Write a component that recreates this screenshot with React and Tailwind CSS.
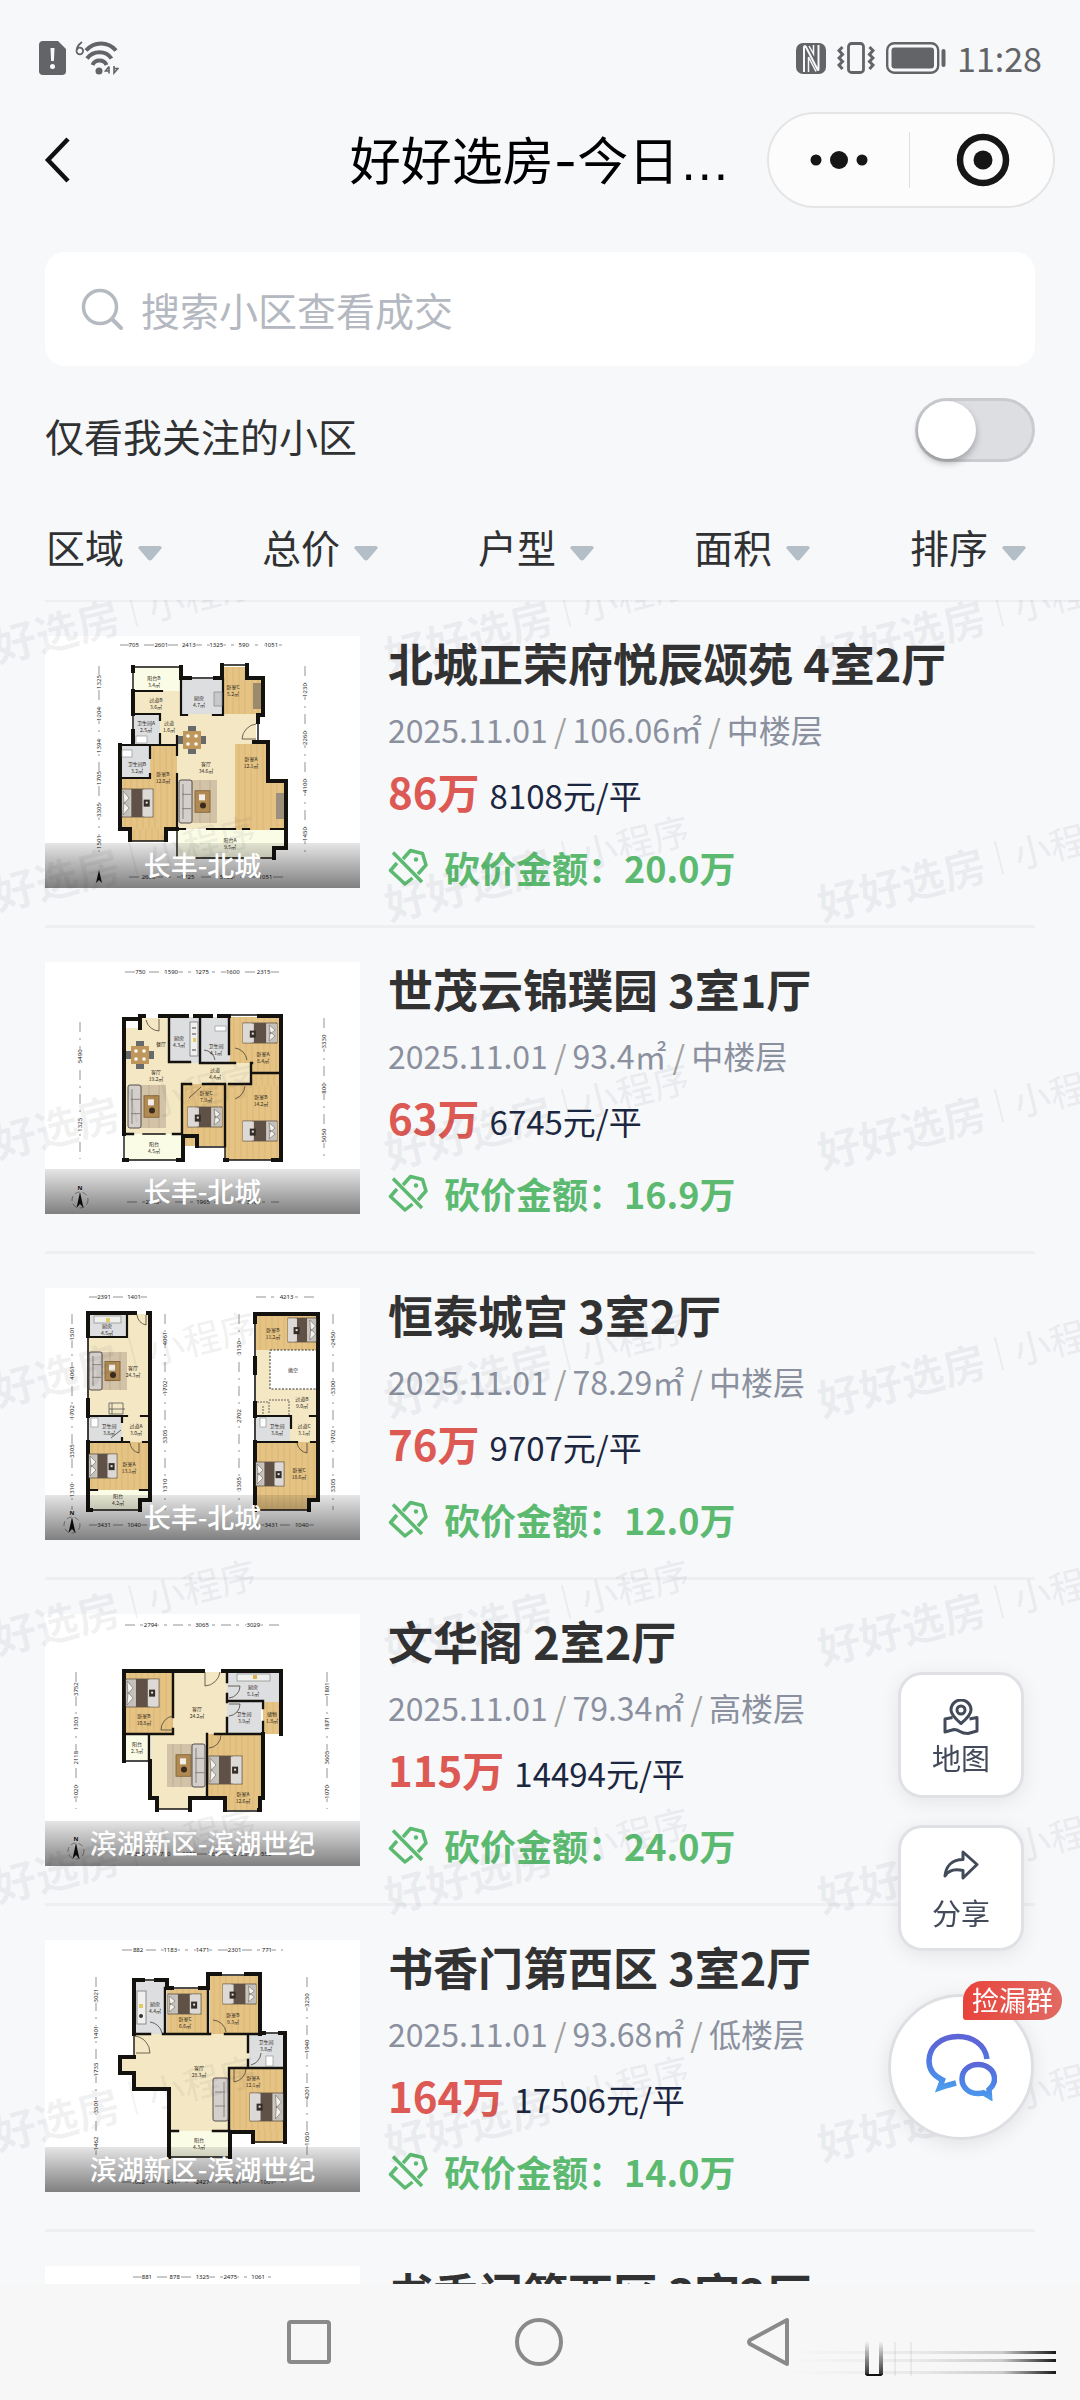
import React from "react";

/* ---------- floor plan pieces ---------- */

const WOOD = "#e5c384";
const CREAM = "#f4e8c4";
const TILE = "#dcdee0";
const PALE = "#fbfce6";
const WALL = "#14120f";

function Room({ x, y, w, h, fill }) {
  return <rect x={x} y={y} width={w} height={h} fill={fill} />;
}

function Wood({ x, y, w, h }) {
  const lines = [];
  for (let i = 4; i < w; i += 6) {
    lines.push(<path key={i} d={`M${x + i} ${y}v${h}`} stroke="#d3a65d" strokeWidth="0.7" opacity="0.5" />);
  }
  return (
    <g>
      <Room x={x} y={y} w={w} h={h} fill={WOOD} />
      {lines}
    </g>
  );
}

function Bed({ x, y, w = 32, h = 28, flip = false }) {
  const head = flip ? x + w * 0.74 : x;
  const blanket = flip ? x + w * 0.26 : x + w * 0.3;
  const sheet = flip ? x : x + w * 0.66;
  return (
    <g>
      <rect x={x} y={y} width={w} height={h} fill="#cfc9c2" stroke="#5d5045" strokeWidth="0.8" />
      <rect x={head} y={y + 1} width={w * 0.26} height={h - 2} fill="#c4c0bb" />
      <path d={`M${head + 1} ${y + 2}l6 ${h / 4}l-5 ${h / 5}zM${head + 1} ${y + h - 2}l6 ${-h / 4}l-5 ${-h / 5}z`} fill="#f4f2ee" stroke="#6e675f" strokeWidth="0.6" />
      <rect x={blanket} y={y} width={w * 0.42} height={h} fill="#5f5146" />
      <rect x={sheet} y={y + 0.5} width={w * 0.32} height={h - 1} fill="#dcd9d6" />
      <rect x={flip ? x + w * 0.2 : x + w * 0.7} y={y + h * 0.38} width="6" height="7" fill="#352d27" />
      <rect x={flip ? x + w * 0.2 + 2 : x + w * 0.7 + 2} y={y + h * 0.38 + 2} width="2" height="2" fill="#e9e4de" />
    </g>
  );
}

function Lounge({ x, y, h = 44, flip = false }) {
  const sofa = flip ? x + 25 : x;
  const rug = flip ? x : x + 7;
  return (
    <g>
      <rect x={rug} y={y} width="31" height={h} fill="#d2c3a8" />
      <path d={`M${rug + 6} ${y}v${h}M${rug + 14} ${y}v${h}M${rug + 24} ${y}v${h}`} stroke="#bba88a" strokeWidth="0.8" />
      <rect x={rug + 9} y={y + h / 4} width="15" height={h / 2} fill="#b18a53" stroke="#7c5c32" strokeWidth="0.8" />
      <rect x={rug + 13} y={y + h / 3} width="6" height="6" fill="#f2eee7" />
      <circle cx={rug + 17} cy={y + h / 2 + 4} r="3" fill="#392a1e" />
      <rect x={sofa} y={y} width="13" height={h} rx="2" fill="#d4cfcb" stroke="#55504c" strokeWidth="1" />
      <path d={`M${sofa + 3} ${y + h / 3}h9M${sofa + 3} ${y + (h * 2) / 3}h9M${sofa + 4} ${y + 4}v${h - 8}`} stroke="#77706a" strokeWidth="0.8" />
    </g>
  );
}

function Dining({ x, y }) {
  return (
    <g>
      <path d={`M${x + 8} ${y}h8v6h-8zM${x + 8} ${y + 22}h8v6h-8zM${x - 2} ${y + 10}h6v8h-6zM${x + 20} ${y + 10}h6v8h-6z`} fill="#67696b" />
      <rect x={x + 3} y={y + 5} width="18" height="18" fill="#bf975b" />
      <circle cx={x + 8} cy={y + 10} r="1.8" fill="#fff" />
      <circle cx={x + 16} cy={y + 10} r="1.8" fill="#fff" />
      <circle cx={x + 8} cy={y + 18} r="1.8" fill="#fff" />
      <circle cx={x + 16} cy={y + 18} r="1.8" fill="#fff" />
    </g>
  );
}

function Names({ items }) {
  return (
    <g fill="#2c2519" fontSize="5" textAnchor="middle" fontFamily='"Noto Sans CJK SC", sans-serif'>
      {items.map(([x, y, name, size], i) => (
        <g key={i}>
          <text x={x} y={y}>{name}</text>
          {size && <text x={x} y={y + 7}>{size}</text>}
        </g>
      ))}
    </g>
  );
}

function DimsH({ x1, x2, y, values }) {
  const step = (x2 - x1) / values.length;
  return (
    <g>
      <path d={`M${x1} ${y}H${x2}`} stroke="#666" strokeWidth="0.7" strokeDasharray="10 5 3 6" />
      {values.map((v, i) => (
        <text key={i} x={x1 + step * (i + 0.5)} y={y + 2} fontSize="6" textAnchor="middle" fill="#222" stroke="#fff" strokeWidth="1.5" paintOrder="stroke" fontFamily='"Noto Sans", sans-serif'>{v}</text>
      ))}
    </g>
  );
}

function DimsV({ x, y1, y2, values }) {
  const step = (y2 - y1) / values.length;
  return (
    <g>
      <path d={`M${x} ${y1}V${y2}`} stroke="#666" strokeWidth="0.7" strokeDasharray="10 6 2 6" />
      {values.map((v, i) => {
        const cy = y1 + step * (i + 0.5);
        return (
          <text key={i} x={x} y={cy} transform={`rotate(-90 ${x} ${cy})`} dy="2" fontSize="6" textAnchor="middle" fill="#222" stroke="#fff" strokeWidth="1.5" paintOrder="stroke" fontFamily='"Noto Sans", sans-serif'>{v}</text>
        );
      })}
    </g>
  );
}

function Compass({ x, y }) {
  return (
    <g>
      <circle cx={x} cy={y} r="8" fill="none" stroke="#777" strokeWidth="0.7" strokeDasharray="5 3" />
      <path d={`M${x} ${y - 8}l3.5 16l-3.5 -4l-3.5 4z`} fill="#111" />
      <text x={x} y={y - 10} fontSize="6" textAnchor="middle" fill="#111" fontFamily='"Noto Sans", sans-serif' fontWeight="700">N</text>
    </g>
  );
}

function Walls({ d, w = 4 }) {
  return <path d={d} fill="none" stroke={WALL} strokeWidth={w} strokeLinejoin="miter" strokeLinecap="square" />;
}

function Doors({ d }) {
  return <path d={d} fill="none" stroke="#4a4338" strokeWidth="0.8" />;
}

function PlanA() {
  return (
    <g>
      <Room x={87} y={31} w={49} h={24} fill={PALE} />
      <Room x={87} y={55} w={49} h={23} fill={CREAM} />
      <Room x={137} y={43} w={41} h={35} fill={TILE} />
      <Wood x={178} y={31} w={25} h={48} />
      <Wood x={203} y={43} w={15} h={36} />
      <Room x={87} y={78} w={28} h={31} fill={TILE} />
      <Room x={115} y={78} w={96} h={31} fill={CREAM} />
      <Room x={132} y={108} w={59} h={85} fill={CREAM} />
      <Wood x={190} y={108} w={33} h={86} />
      <Wood x={222} y={146} w={17} h={48} />
      <Room x={76} y={109} w={29} h={33} fill={TILE} />
      <Wood x={105} y={109} w={27} h={34} />
      <Wood x={76} y={142} w={56} h={51} />
      <Wood x={85} y={193} w={34} h={12} />
      <Room x={132} y={194} w={108} h={20} fill={PALE} />
      <Room x={132} y={212} w={96} h={10} fill={PALE} />
      <Walls d="M88 31V35M136 31V42H145M170 42H177V29M202 29V42H218V79H213V86" />
      <Walls d="M88 55V78M88 95V108M75 109V193H85V204M121 204V193H132" />
      <Walls d="M209 106H223V145H241V212H229V222" />
      <Walls w={1.4} d="M88 31H136M88 31V108M145 42H170M178 29H202M85 205H120M132 194V222H229M213 86V106" />
      <Walls w={2.2} d="M88 55H117M88 78H115M136 43V79H142M168 79H178V43M115 78V84M115 98V109M75 109H132V100M132 109V119M132 138V194M105 109V122M75 142H105V138M132 193H140M162 193H190M198 193H204M226 193H241" />
      <rect x="208" y="47" width="8" height="26" fill="#9c8a6d" />
      <rect x="231" y="157" width="8" height="26" fill="#9c8f7c" />
      <rect x="169" y="56" width="8" height="14" fill="#c6c8ca" stroke="#888" strokeWidth="0.7" />
      <rect x="91" y="100" width="11" height="7" fill="#fff" stroke="#888" strokeWidth="0.6" />
      <rect x="77" y="114" width="10" height="7" fill="#fff" stroke="#888" strokeWidth="0.6" />
      <Doors d="M197 103A16 16 0 0 1 211 88M197 103H211" />
      <Bed x={77} y={153} w={31} h={28} />
      <Lounge x={134} y={144} h={43} />
      <Dining x={135} y={90} />
      <Names items={[[109, 44, "阳台B", "3.4㎡"], [111, 66, "过道B", "3.6㎡"], [154, 64, "厨房", "4.7㎡"], [188, 53, "卧室C", "5.2㎡"], [101, 89, "卫生间A", "2.5㎡"], [124, 89, "过道", "1.6㎡"], [161, 130, "客厅", "34.6㎡"], [206, 125, "卧室A", "12.1㎡"], [92, 130, "卫生间B", "3.2㎡"], [118, 140, "卧室B", "12.0㎡"], [185, 206, "阳台A", "9.5㎡"]]} />
      <DimsH x1={75} x2={240} y={9} values={["705", "2601", "2413", "1325", "590", "1051"]} />
      <DimsH x1={84} x2={240} y={241} values={["2600", "1725", "5103", "1051"]} />
      <DimsV x={54} y1={30} y2={222} values={["1325", "1204", "1394", "1705", "3305", "1501"]} />
      <DimsV x={260} y1={30} y2={222} values={["1230", "2260", "4100", "1450"]} />
      <path d="M54 234l3 13l-3 -3l-3 3z" fill="#111" />
    </g>
  );
}

function PlanB() {
  return (
    <g>
      <Room x={80} y={66} w={58} h={106} fill={CREAM} />
      <Room x={94} y={56} w={30} h={12} fill={CREAM} />
      <Room x={124} y={55} w={31} h={46} fill={TILE} />
      <Room x={156} y={55} w={29} h={46} fill={TILE} />
      <Wood x={185} y={55} w={49} h={56} />
      <Room x={137} y={101} w={70} h={22} fill={CREAM} />
      <Wood x={137} y={122} w={42} h={62} />
      <Wood x={180} y={122} w={54} h={76} />
      <Wood x={207} y={112} w={27} h={12} />
      <Room x={80} y={172} w={57} h={26} fill={PALE} />
      <Walls d="M95 66V57H79V172M95 54H99M115 54H142M150 54H166M174 54H184M214 54H236V198H228M79 198H82M133 198H138V174H152V184M180 198H182" />
      <Walls w={1.4} d="M184 53H214M79 172V198H133M152 185H180V198H228M98 172H120" />
      <Walls w={2.4} d="M124 55V100H145M155 55V101H190M184 55V92M79 172H88M128 172H137V122H146M158 122H180V184M184 122H206V101H207M206 111H236" />
      <Doors d="M101 58A14 14 0 0 0 114 69V57M190 86A14 14 0 0 1 202 98M190 137A16 16 0 0 0 200 124M144 136L156 125M159 88A12 12 0 0 1 170 98" />
      <rect x="145" y="60" width="8" height="34" fill="#f0f0ee" stroke="#777" strokeWidth="0.8" />
      <path d="M147 66h4M147 72h4M147 88h4" stroke="#444" />
      <rect x="148" y="76" width="3" height="4" fill="#e1cc63" />
      <rect x="170" y="64" width="11" height="5" fill="#fff" stroke="#888" strokeWidth="0.6" />
      <Dining x={83} y={79} />
      <Lounge x={83} y={123} h={43} />
      <Bed x={198} y={61} w={34} h={20} flip />
      <Bed x={143} y={145} w={34} h={20} flip />
      <Bed x={198} y={159} w={34} h={20} flip />
      <Names items={[[116, 84, "餐厅", ""], [111, 112, "客厅", "19.2㎡"], [134, 78, "厨房", "4.3㎡"], [171, 86, "卫生间", "4.1㎡"], [218, 94, "卧室A", "8.4㎡"], [170, 110, "过道", "4.4㎡"], [161, 133, "卧室C", "7.9㎡"], [216, 137, "卧室B", "14.2㎡"], [109, 184, "阳台", "4.5㎡"]]} />
      <DimsH x1={80} x2={234} y={10} values={["750", "1590", "1275", "1600", "2315"]} />
      <DimsH x1={82} x2={234} y={240} values={["2845", "1965", "3100"]} />
      <DimsV x={35} y1={60} y2={197} values={["5490", "1325"]} />
      <DimsV x={279} y1={56} y2={197} values={["3330", "800", "5050"]} />
      <Compass x={35} y={238} />
    </g>
  );
}

function PlanC() {
  return (
    <g>
      <Room x={43} y={26} w={60} h={102} fill={CREAM} />
      <Room x={43} y={26} w={39} h={23} fill={TILE} />
      <Room x={43} y={128} w={34} h={25} fill={TILE} />
      <Room x={77} y={128} w={27} h={26} fill={CREAM} />
      <Wood x={43} y={154} w={61} h={48} />
      <Room x={43} y={202} w={60} h={10} fill={PALE} />
      <Room x={43} y={212} w={51} h={10} fill={PALE} />
      <Walls d="M90 25H43V48M43 112V128M43 154V222H46M95 222V212H105V25H103" />
      <Walls w={1.6} d="M43 48V112M43 128V154M46 222H95" />
      <Walls w={2.2} d="M43 49H82V26M43 128H82M96 128H104M77 128V134M43 154H84M98 154H104M77 150V154M43 202H52M95 202H104" />
      <rect x="49" y="28" width="27" height="7" fill="#efefec" stroke="#888" strokeWidth="0.7" />
      <rect x="61" y="30" width="4" height="4" fill="#e1cc63" />
      <Lounge x={44} y={64} h={38} />
      <path d="M64 115h14v11h-14zM67 115v11M64 121h16" fill="none" stroke="#555" strokeWidth="0.8" />
      <rect x="46" y="130" width="7" height="9" fill="#fff" stroke="#888" strokeWidth="0.6" />
      <Bed x={44} y={166} w={28} h={24} />
      <Room x={211} y={62} w={61} h={66} fill={CREAM} />
      <Wood x={211} y={27} w={61} h={35} />
      <rect x="225" y="62" width="47" height="39" fill="#fff" stroke="#333" strokeWidth="1" strokeDasharray="2 1.5" />
      <Room x={211} y={128} w={34} h={26} fill={TILE} />
      <Room x={245} y={128} w={27} h={26} fill={CREAM} />
      <Wood x={211} y={154} w={61} h={58} />
      <Wood x={211} y={212} w={52} h={10} />
      <Walls d="M210 34V26H273V212H264V222M210 70V85M210 115V128M210 154V222" />
      <Walls w={1.6} d="M210 34V128V222H263" />
      <Walls w={2.2} d="M210 128H246V140M265 128H273M210 154H252M266 154H273" />
      <path d="M224 112h20v15M212 114h12v12M218 126v-9" fill="none" stroke="#555" strokeWidth="0.9" strokeDasharray="2 1" />
      <rect x="215" y="130" width="6" height="9" fill="#fff" stroke="#888" strokeWidth="0.6" />
      <Bed x={243} y={30} w={28} h={24} flip />
      <Bed x={211} y={174} w={28} h={24} />
      <Doors d="M92 27A12 12 0 0 0 101 37V27M85 155A12 12 0 0 0 94 165V155M252 155A12 12 0 0 0 262 165V155M66 150L76 142" />
      <Names items={[[62, 40, "厨房", "4.5㎡"], [88, 82, "客厅", "24.3㎡"], [64, 140, "卫生间", "3.8㎡"], [91, 140, "过道A", "3.0㎡"], [84, 178, "卧室A", "13.1㎡"], [73, 210, "阳台", "4.2㎡"], [228, 44, "卧室B", "11.2㎡"], [248, 84, "挑空", ""], [257, 113, "过道B", "9.0㎡"], [232, 140, "卫生间", "3.8㎡"], [259, 140, "过道C", "3.1㎡"], [254, 184, "卧室C", "18.6㎡"]]} />
      <DimsH x1={44} x2={104} y={9} values={["2391", "1401"]} />
      <DimsH x1={211} x2={272} y={9} values={["4213"]} />
      <DimsH x1={44} x2={104} y={237} values={["3431", "1040"]} />
      <DimsH x1={211} x2={272} y={237} values={["3431", "1040"]} />
      <DimsV x={27} y1={26} y2={222} values={["1501", "4061", "1702", "3305", "1310"]} />
      <DimsV x={120} y1={26} y2={222} values={["4061", "1702", "3305", "1310"]} />
      <DimsV x={194} y1={26} y2={230} values={["3150", "2702", "3305"]} />
      <DimsV x={288} y1={26} y2={222} values={["2450", "3300", "1702", "3305"]} />
      <Compass x={27} y={237} />
    </g>
  );
}

function PlanD() {
  return (
    <g>
      <Wood x={81} y={58} w={47} h={62} />
      <Room x={81} y={120} w={23} h={26} fill={PALE} />
      <Room x={128} y={58} w={54} h={63} fill={CREAM} />
      <Room x={106} y={120} w={56} h={63} fill={CREAM} />
      <Room x={112} y={182} w={32} h={13} fill={CREAM} />
      <Room x={182} y={58} w={52} h={30} fill={TILE} />
      <Room x={182} y={88} w={34} h={32} fill={TILE} />
      <Wood x={218} y={88} w={17} h={32} />
      <Wood x={163} y={120} w={54} h={63} />
      <Wood x={180} y={182} w={34} h={14} />
      <Walls d="M158 57H79V147M178 57H236V120M218 120V184H215V196H214M105 147V184H112V196M145 196V184H180V196" />
      <Walls w={1.4} d="M79 147H104M112 195H144M180 197H214" />
      <Walls w={2.4} d="M128 57V103M128 115V120H81M104 120V147M182 57V68M182 80V88M182 104V120H170M182 87H218V94M218 108V120H182M162 120V183" />
      <Doors d="M160 58V72A16 16 0 0 0 175 58M128 102A14 14 0 0 0 116 116H128M183 72H195A12 12 0 0 1 184 84M184 90H195A12 12 0 0 1 184 102M176 121A13 13 0 0 1 164 134" />
      <rect x="192" y="60" width="33" height="7" fill="#f0f0ee" stroke="#888" strokeWidth="0.7" />
      <rect x="208" y="61" width="4" height="4" fill="#deb14f" />
      <Bed x={81} y={65} w={33} h={28} />
      <Bed x={164} y={142} w={33} h={28} />
      <Lounge x={122} y={130} h={43} flip />
      <Names items={[[99, 104, "卧室B", "10.8㎡"], [92, 132, "阳台", "2.3㎡"], [152, 97, "客厅", "24.2㎡"], [208, 75, "厨房", "5.1㎡"], [199, 102, "卫生间", "3.9㎡"], [227, 102, "储物", "1.8㎡"], [198, 182, "卧室A", "12.6㎡"]]} />
      <DimsH x1={80} x2={234} y={11} values={["2794", "3065", "3029"]} />
      <DimsH x1={80} x2={234} y={240} values={["1350", "1700", "1250", "1617", "2730", "550"]} />
      <DimsV x={31} y1={58} y2={195} values={["3752", "1303", "2118", "1020"]} />
      <DimsV x={282} y1={58} y2={195} values={["1801", "1871", "3605", "1070"]} />
      <Compass x={31} y={237} />
    </g>
  );
}

function PlanE() {
  return (
    <g>
      <Room x={91} y={41} w={29} h={53} fill={TILE} />
      <Wood x={122} y={49} w={41} h={45} />
      <Wood x={165} y={36} w={49} h={58} />
      <Room x={89} y={94} w={115} h={56} fill={CREAM} />
      <Room x={76} y={118} w={16} h={15} fill={CREAM} />
      <Room x={126} y={148} w={58} h={43} fill={CREAM} />
      <Room x={204} y={94} w={34} h={33} fill={TILE} />
      <Wood x={185} y={129} w={53} h={62} />
      <Wood x={210} y={190} w={28} h={13} />
      <Room x={126} y={191} w={58} h={26} fill={PALE} />
      <Walls d="M98 40H89V94M111 40H122V48H127M155 48H163V34H175M201 34H215V94M215 93H219M235 93H240V202M208 202V192H185V217M89 117H75V133H89V149H124V217" />
      <Walls w={1.4} d="M98 40H111M127 48H155M175 35H201M219 93H235M208 202H240M124 217H185M89 94V117" />
      <Walls w={2.4} d="M89 94H105M118 94H165M180 94H215M120 48V94M163 48V94M203 94V112M203 120V128H184M198 128H240M184 128V191M124 191H133M168 191H185" />
      <rect x="92" y="51" width="9" height="33" fill="#f0f0ee" stroke="#777" strokeWidth="0.8" />
      <rect x="94" y="64" width="4" height="4" fill="#e1cc63" />
      <circle cx="96" cy="76" r="2" fill="#333" />
      <rect x="221" y="116" width="7" height="10" fill="#fff" stroke="#888" strokeWidth="0.6" />
      <Doors d="M89 96A17 17 0 0 1 105 113H91M105 82A14 14 0 0 1 117 93M168 80A14 14 0 0 1 181 92M189 129V142A14 14 0 0 0 201 129M206 125A14 14 0 0 0 216 113" />
      <Bed x={123} y={54} w={33} h={20} />
      <Bed x={178} y={44} w={33} h={20} flip />
      <Bed x={205} y={153} w={33} h={28} flip />
      <rect x="168" y="138" width="15" height="43" rx="2" fill="#d4cfcb" stroke="#55504c" />
      <path d="M170 152h10M170 166h10M179 142v35" stroke="#77706a" strokeWidth="0.8" />
      <Names items={[[110, 66, "厨房", "4.4㎡"], [140, 81, "卧室C", "6.6㎡"], [188, 77, "卧室B", "9.3㎡"], [221, 104, "卫生间", "3.8㎡"], [154, 130, "客厅", "28.3㎡"], [208, 140, "卧室A", "12.1㎡"], [154, 202, "阳台", "4.3㎡"]]} />
      <DimsH x1={77} x2={238} y={10} values={["882", "1183", "1471", "2301", "771"]} />
      <DimsH x1={77} x2={238} y={242} values={["1062", "1241", "2427", "1491", "1001"]} />
      <DimsV x={51} y1={37} y2={222} values={["3021", "1401", "1735", "3501", "1462"]} />
      <DimsV x={262} y1={37} y2={222} values={["3230", "1940", "4201", "1050"]} />
    </g>
  );
}

function PlanF() {
  return (
    <g>
      <DimsH x1={88} x2={227} y={11} values={["881", "878", "1325", "2475", "1061"]} />
      <Wood x={90} y={40} w={140} h={160} />
      <Walls d="M90 40H230V200H90Z" />
    </g>
  );
}

/* ---------- data ---------- */

const LISTINGS = [
  { name: "北城正荣府悦辰颂苑 4室2厅", area: "106.06㎡", floor: "中楼层", total: "86万", unit: "8108元/平", cut: "20.0万", region: "长丰-北城", Plan: PlanA },
  { name: "世茂云锦璞园 3室1厅", area: "93.4㎡", floor: "中楼层", total: "63万", unit: "6745元/平", cut: "16.9万", region: "长丰-北城", Plan: PlanB },
  { name: "恒泰城宫 3室2厅", area: "78.29㎡", floor: "中楼层", total: "76万", unit: "9707元/平", cut: "12.0万", region: "长丰-北城", Plan: PlanC },
  { name: "文华阁 2室2厅", area: "79.34㎡", floor: "高楼层", total: "115万", unit: "14494元/平", cut: "24.0万", region: "滨湖新区-滨湖世纪", Plan: PlanD },
  { name: "书香门第西区 3室2厅", area: "93.68㎡", floor: "低楼层", total: "164万", unit: "17506元/平", cut: "14.0万", region: "滨湖新区-滨湖世纪", Plan: PlanE },
  { name: "书香门第西区 3室2厅", area: "93.68㎡", floor: "低楼层", total: "164万", unit: "17506元/平", cut: "14.0万", region: "滨湖新区-滨湖世纪", Plan: PlanF },
];

const FILTERS = ["区域", "总价", "户型", "面积", "排序"];

/* ---------- page parts ---------- */

function StatusBar() {
  return (
    <div className="flex h-[112px] shrink-0 items-center justify-between pt-1 pr-[38px] pl-[39px] text-[#636467]">
      <div className="flex items-center gap-[9px]">
        <svg width="27" height="34" viewBox="0 0 27 34" aria-hidden="true">
          <path d="M4 0H19L27 8V30a4 4 0 0 1-4 4H4a4 4 0 0 1-4-4V4a4 4 0 0 1 4-4z" fill="currentColor" />
          <path d="M11.500 7h4l-.6 13h-2.800z" fill="#f7f8fa" />
          <circle cx="13.500" cy="25.500" r="2.500" fill="#f7f8fa" />
        </svg>
        <svg width="44" height="34" viewBox="0 0 44 34" aria-hidden="true">
          <path d="M7 1C3 4 1.500 7 1.500 10a3.300 3.300 0 1 0 3.300-3.300C3.500 6.700 2.500 7.500 2 8.500" fill="none" stroke="currentColor" strokeWidth="1.8" />
          <path d="M11 9.500C19 0 33 0 41 9.500" fill="none" stroke="currentColor" strokeWidth="4" />
          <path d="M12 17.500C18 9 31 9 36.500 17.500" fill="none" stroke="currentColor" strokeWidth="4" />
          <path d="M17.500 24C20 18 29 18 31.500 24" fill="none" stroke="currentColor" strokeWidth="4" />
          <circle cx="24" cy="30" r="3.500" fill="currentColor" />
          <path d="M34 25.500v7M34 25.500l-3.500 4.500h4M39 25v7l4-4.500h-4" fill="none" stroke="currentColor" strokeWidth="1.600" />
        </svg>
      </div>
      <div className="flex items-center gap-[11px]">
        <svg width="30" height="31" viewBox="0 0 30 31" aria-hidden="true">
          <rect width="30" height="31" rx="7" fill="currentColor" />
          <path d="M8 29V4.500Q8 2 10 4L21.500 26.500Q22.500 28 22.500 25.500V2" fill="none" stroke="#f7f8fa" strokeWidth="2" />
          <path d="M12.500 29V14L20 28.500" fill="none" stroke="#f7f8fa" strokeWidth="1.500" />
          <path d="M17.500 2V11L13 3" fill="none" stroke="#f7f8fa" strokeWidth="1.500" />
        </svg>
        <svg width="38" height="32" viewBox="0 0 38 32" aria-hidden="true" fill="none" stroke="currentColor" strokeWidth="2.800">
          <rect x="11.500" y="1.500" width="15" height="29" rx="3" />
          <path d="M5.500 5L2 8.500l3.500 4L2 16l3.500 3.500L2 23l3.500 4M32.500 5L36 8.500l-3.500 4L36 16l-3.500 3.500L36 23l-3.500 4" strokeWidth="3" />
        </svg>
        <svg width="60" height="32" viewBox="0 0 60 32" aria-hidden="true">
          <rect x="1.200" y="1.200" width="51" height="29.500" rx="7" fill="none" stroke="currentColor" strokeWidth="2.400" />
          <rect x="5.500" y="5.500" width="42.500" height="21" rx="3" fill="currentColor" />
          <path d="M57.500 9v14" stroke="currentColor" strokeWidth="4" strokeLinecap="round" />
        </svg>
        <time className="text-[34px] leading-[40px]">11:28</time>
      </div>
    </div>
  );
}

function TitleBar() {
  return (
    <header className="relative flex h-24 shrink-0 items-center justify-between pr-[25px] pl-[42px]">
      <button type="button" aria-label="返回" className="flex h-16 w-16 items-center">
        <svg width="32" height="48" viewBox="0 0 32 48" aria-hidden="true">
          <path d="M26 3L6 24L26 45" fill="none" stroke="#101010" strokeWidth="4.500" />
        </svg>
      </button>
      <h1 className="absolute inset-x-0 mx-auto w-fit text-[51px] leading-[64px] text-black">
        好好选房<span className="font-['Inter']">-</span>今日<span className="font-['Liberation_Sans']">…</span>
      </h1>
      <div className="flex h-24 w-72 items-center rounded-full border-2 border-[#e4e5e7] bg-[#fcfcfd]">
        <button type="button" aria-label="更多" className="flex h-full flex-1 items-center justify-center">
          <svg width="58" height="20" viewBox="0 0 58 20" aria-hidden="true" fill="#161616">
            <circle cx="6" cy="10" r="5.500" />
            <circle cx="29" cy="10" r="9" />
            <circle cx="52" cy="10" r="5.500" />
          </svg>
        </button>
        <span className="h-14 w-px bg-[#dedfe1]" />
        <button type="button" aria-label="关闭" className="flex h-full flex-1 items-center justify-center pl-1">
          <svg width="54" height="54" viewBox="0 0 54 54" aria-hidden="true">
            <circle cx="27" cy="27" r="23" fill="none" stroke="#161616" strokeWidth="6.500" />
            <circle cx="27" cy="27" r="9.500" fill="#161616" />
          </svg>
        </button>
      </div>
    </header>
  );
}

function SearchBox() {
  return (
    <label className="mx-[45px] mt-[44px] flex h-[114px] shrink-0 items-center gap-[18px] rounded-[20px] bg-white px-[36px]">
      <svg width="42" height="42" viewBox="0 0 42 42" aria-hidden="true" fill="none" stroke="#b5b9c0" strokeWidth="3.500" strokeLinecap="round">
        <circle cx="19" cy="19" r="16.500" />
        <path d="M32 32L40 40" strokeWidth="4" />
      </svg>
      <input
        type="search"
        aria-label="搜索小区"
        placeholder="搜索小区查看成交"
        className="h-16 min-w-0 flex-1 bg-transparent text-[39px] leading-[56px] text-[#303133] outline-none placeholder:text-[#b4b8c0] placeholder:opacity-100"
      />
    </label>
  );
}

function FollowSwitch() {
  return (
    <div className="mx-[45px] mt-[32px] flex h-[78px] shrink-0 items-start justify-between">
      <label htmlFor="followed" className="mt-2 text-[39px] leading-[58px] text-[#303133]">仅看我关注的小区</label>
      <input
        id="followed"
        type="checkbox"
        role="switch"
        className="h-[64px] w-[120px] appearance-none rounded-full border-[3px] border-[#c9cbcf] bg-[#dcdee2] before:block before:h-[58px] before:w-[58px] before:rounded-full before:bg-white before:shadow-[0_4px_7px_rgba(0,0,0,0.28)]"
      />
    </div>
  );
}

function Filters() {
  return (
    <div className="mt-[34px] grid h-[90px] shrink-0 grid-cols-5">
      {FILTERS.map((f) => (
        <button key={f} type="button" className="flex h-[72px] items-center gap-[14px] pl-[46px] text-[39px] leading-[56px] text-[#303133]">
          {f}
          <svg width="24" height="15" viewBox="0 0 24 15" aria-hidden="true" className="mt-[14px]">
            <path d="M2 0H22Q25 1 23 3L14 13.500Q12 15.500 10 13.500L1 3Q-1 1 2 0z" fill="#b4bec6" />
          </svg>
        </button>
      ))}
    </div>
  );
}

function CutIcon() {
  return (
    <svg width="40" height="38" viewBox="0 0 40 38" aria-hidden="true" fill="none" stroke="#5cba70" strokeWidth="3.500" strokeLinejoin="round">
      <path d="M15 11L22.500 2.500L34.500 5.500L38 17L30 26" />
      <path d="M9 15L2.500 22.500L17 36L24.500 30" />
      <path d="M5 4.500L34 34" />
      <circle cx="28" cy="11.500" r="2.200" fill="#5cba70" stroke="none" />
    </svg>
  );
}

function Listing({ item }) {
  const { Plan } = item;
  return (
    <li className="mx-[45px] flex gap-[28px] border-b-[3px] border-[#eeeff1] pt-[34px] pb-[37px]">
      <figure className="relative h-[252px] w-[315px] shrink-0 overflow-hidden bg-white">
        <svg viewBox="0 0 315 252" className="h-full w-full" role="img" aria-label={item.name}>
          <Plan />
        </svg>
        <figcaption className="absolute inset-x-0 bottom-0 bg-linear-to-b from-black/10 to-black/50 pb-[2px] text-center text-[27px] leading-[43px] font-medium text-white">
          {item.region}
        </figcaption>
      </figure>
      <div className="h-[252px] min-w-0 flex-1">
        <h2 className="truncate text-[45px] leading-[54px] font-bold text-[#323233]">{item.name}</h2>
        <p className="mt-[18px] flex gap-[6px] text-[32px] leading-[42px] text-[#8a909e]">
          <span>2025.11.01</span>
          <span className="text-[#a3a29f]">/</span>
          <span>{item.area}</span>
          <span className="text-[#a3a29f]">/</span>
          <span>{item.floor}</span>
        </p>
        <p className="mt-[14px] flex items-baseline gap-[10px] leading-[54px]">
          <strong className="text-[42px] font-bold text-[#dd5a54]">{item.total}</strong>
          <span className="text-[33px] text-[#1b2740]">{item.unit}</span>
        </p>
        <p className="mt-[24px] flex items-center gap-[16px] text-[36px] leading-[42px] font-bold text-[#5cba70]">
          <CutIcon />
          <span>砍价金额：{item.cut}</span>
        </p>
      </div>
    </li>
  );
}

function Watermark() {
  return (
    <div aria-hidden="true" className="pointer-events-none absolute inset-0 overflow-hidden select-none">
      <div className="-mt-[107px] -ml-[113px] grid grid-cols-[repeat(3,433px)] auto-rows-[248px]">
        {Array.from({ length: 24 }, (_, i) => (
          <div key={i} className="flex items-center justify-center">
            <span className="flex -rotate-[14deg] items-center gap-[14px] whitespace-nowrap text-[#282d3c]/[0.06]">
              <b className="text-[43px] font-bold">好好选房</b>
              <i className="h-[34px] w-[2px] bg-[#282d3c]/[0.06]" />
              <span className="text-[37px] font-medium">小程序</span>
            </span>
          </div>
        ))}
      </div>
    </div>
  );
}

function FloatingActions() {
  const card =
    "flex h-[126px] w-[126px] flex-col items-center justify-center rounded-[24px] border-[3px] border-[#e0e1e4] bg-white text-[29px] leading-[36px] text-[#434a5a] shadow-[0_4px_20px_rgba(0,0,0,0.08)]";
  return (
    <div className="fixed right-[46px] bottom-[260px] flex flex-col items-center">
      <button type="button" className={card}>
        <svg width="36" height="36" viewBox="0 0 36 36" aria-hidden="true" className="mt-1 mb-1" fill="none" stroke="#434a5a" strokeWidth="3" strokeLinejoin="round">
          <path d="M18 24.500C12 19.500 8 15.500 8 11a10 10 0 0 1 20 0c0 4.500-4 8.500-10 13.500z" />
          <circle cx="18" cy="11" r="4" />
          <path d="M9.500 18.500L2 20V33l9-2.500q3 0 6 2t8 2L34 32V18.500L26.500 20" />
        </svg>
        地图
      </button>
      <button type="button" className={`mt-[27px] ${card}`}>
        <svg width="36" height="30" viewBox="0 0 36 30" aria-hidden="true" className="mt-1 mb-[14px]" fill="none" stroke="#434a5a" strokeWidth="3" strokeLinejoin="round">
          <path d="M20 2L34 14.500L20 28V20.500C11 18.500 5 21 2 26C3 16 9 9.500 20 9.500z" />
        </svg>
        分享
      </button>
      <button type="button" aria-label="捡漏群" className="relative mt-[43px] flex h-[146px] w-[146px] items-center justify-center rounded-full border-[3px] border-[#dedfe2] bg-white shadow-[0_4px_20px_rgba(0,0,0,0.09)]">
        <svg width="72" height="68" viewBox="0 0 72 68" aria-hidden="true" fill="none" strokeWidth="5.500">
          <defs>
            <linearGradient id="chat" x1="0" y1="0" x2="0" y2="56" gradientUnits="userSpaceOnUse">
              <stop offset="0.200" stopColor="#5d66d6" />
              <stop offset="0.600" stopColor="#4d7fe6" />
              <stop offset="1" stopColor="#4c9cec" />
            </linearGradient>
            <linearGradient id="chat-small" x1="0" y1="30" x2="0" y2="66" gradientUnits="userSpaceOnUse">
              <stop offset="0" stopColor="#5d66d6" />
              <stop offset="0.500" stopColor="#4d7fe6" />
              <stop offset="1" stopColor="#4c9cec" />
            </linearGradient>
          </defs>
          <path d="M62 26C60 11 47 3.500 33 3.500C16 3.500 4 14 4 28C4 36 9 43 17.500 47L14.500 55L22 52.500L31 50" stroke="url(#chat)" />
          <path d="M53 31.500c-9 0-16 6-16 14.500s7 14.500 16 14.500c2 0 4 0 5.500-.6l6 3.600l-.5-7c3.500-3 5.500-6 5.500-10.500c0-8.500-7-14.500-16.500-14.500z" stroke="url(#chat-small)" />
        </svg>
        <span className="absolute -top-[16px] left-[72px] rounded-[20px] rounded-bl-[3px] bg-linear-to-r from-[#e8423a] to-[#e06a63] px-[9px] pb-[2px] text-[27px] leading-[37px] whitespace-nowrap text-white">捡漏群</span>
      </button>
    </div>
  );
}

function SystemNav() {
  return (
    <nav className="fixed inset-x-0 bottom-0 h-[116px] bg-[#f7f7f7]">
      <div className="mx-auto flex h-full w-[508px] items-center justify-between pr-1">
        <button type="button" aria-label="最近任务">
          <svg width="46" height="46" viewBox="0 0 46 46" aria-hidden="true">
            <rect x="3" y="3" width="40" height="40" rx="2" fill="none" stroke="#8a8a8a" strokeWidth="4" />
          </svg>
        </button>
        <button type="button" aria-label="主屏幕">
          <svg width="50" height="50" viewBox="0 0 50 50" aria-hidden="true">
            <circle cx="25" cy="25" r="22" fill="none" stroke="#8a8a8a" strokeWidth="4" />
          </svg>
        </button>
        <button type="button" aria-label="返回上一页">
          <svg width="44" height="50" viewBox="0 0 44 50" aria-hidden="true">
            <path d="M41 3V47L4 27Q2 25 4 23z" fill="none" stroke="#8a8a8a" strokeWidth="4" strokeLinejoin="round" />
          </svg>
        </button>
      </div>
      <svg width="270" height="40" viewBox="0 0 270 40" aria-hidden="true" className="absolute right-[24px] bottom-[22px]">
        <defs>
          <linearGradient id="sweep" x1="0" x2="1">
            <stop offset="0" stopColor="#000" stopOpacity="0" />
            <stop offset="0.500" stopColor="#000" stopOpacity="0.060" />
            <stop offset="0.800" stopColor="#000" stopOpacity="0.180" />
            <stop offset="1" stopColor="#000" stopOpacity="0.900" />
          </linearGradient>
          <linearGradient id="drop" x1="0" y1="0" x2="0" y2="1">
            <stop offset="0" stopColor="#000" stopOpacity="0" />
            <stop offset="1" stopColor="#000" stopOpacity="0.800" />
          </linearGradient>
        </defs>
        <rect x="0" y="13" width="270" height="3" fill="url(#sweep)" />
        <rect x="0" y="21" width="270" height="3" fill="url(#sweep)" />
        <rect x="0" y="33" width="270" height="3" fill="url(#sweep)" />
        <rect x="82" y="3" width="15" height="34" fill="#f7f7f7" />
        <rect x="79" y="3" width="4" height="34" fill="url(#drop)" />
        <rect x="93" y="3" width="4" height="34" fill="url(#drop)" />
        <rect x="80" y="36" width="16" height="2" rx="1" fill="#111" />
        <path d="M109 4v34M125 4v34" stroke="#000" strokeOpacity="0.050" strokeWidth="2" />
      </svg>
    </nav>
  );
}

export default function App() {
  return (
    <div className="flex h-screen flex-col overflow-hidden bg-[#f7f8fa] font-['Noto_Sans_CJK_SC',sans-serif]">
      <StatusBar />
      <TitleBar />
      <SearchBox />
      <FollowSwitch />
      <Filters />
      <main className="relative min-h-0 flex-1 overflow-hidden">
        <div className="ml-[45px] h-[2px] bg-[#eeeff1]" />
        <ul>
          {LISTINGS.map((item, i) => (
            <Listing key={i} item={item} />
          ))}
        </ul>
        <Watermark />
      </main>
      <FloatingActions />
      <SystemNav />
    </div>
  );
}
